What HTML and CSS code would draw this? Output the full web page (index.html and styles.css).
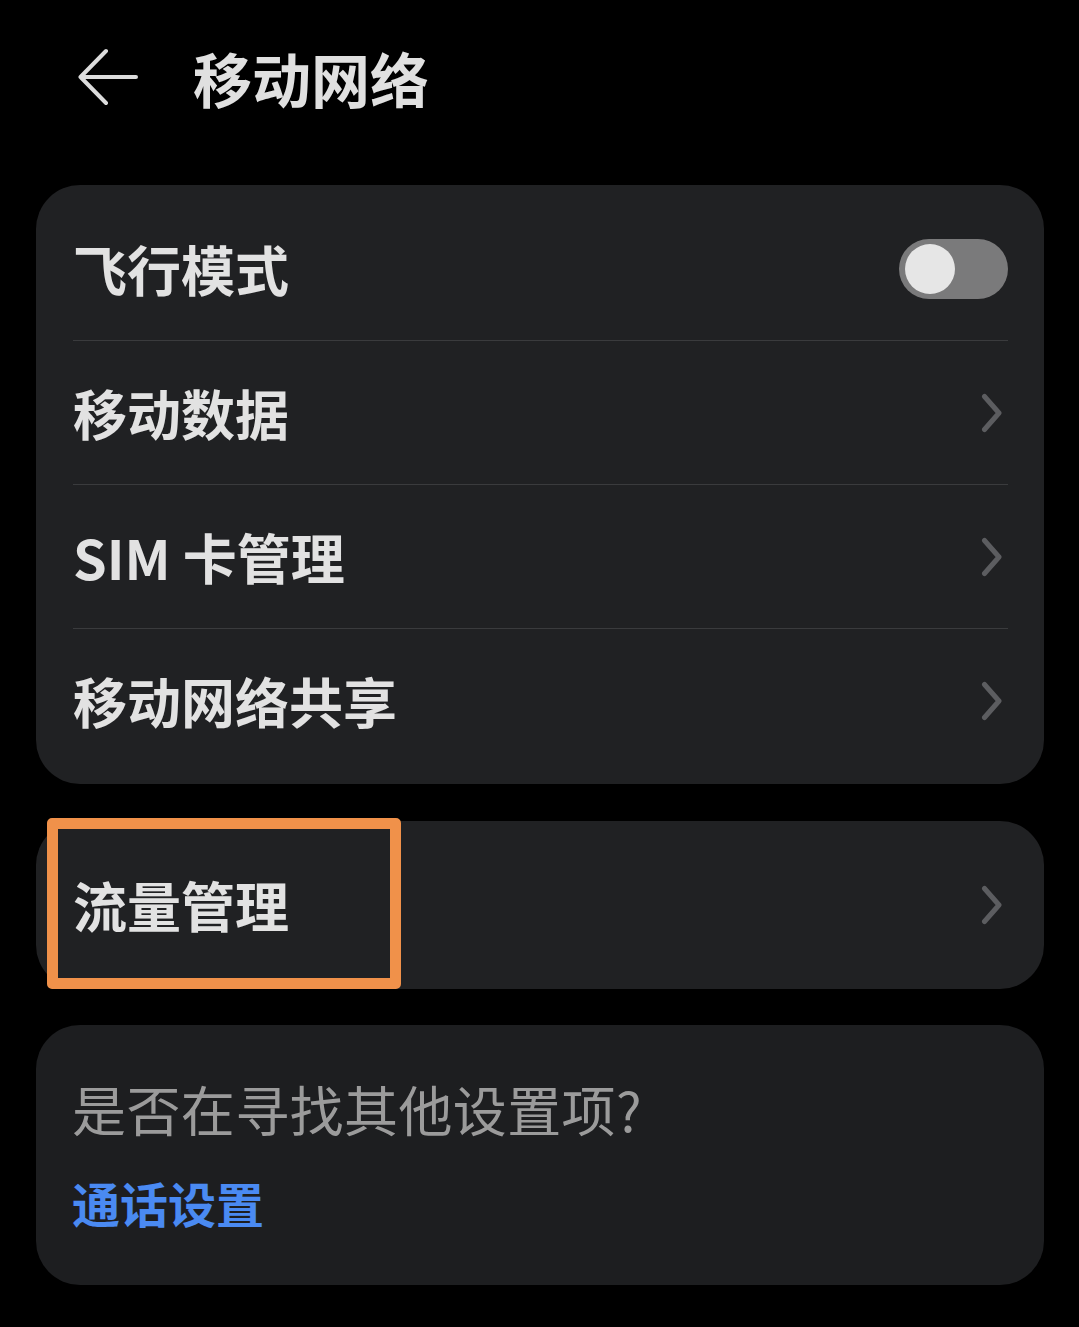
FILE: index.html
```html
<!DOCTYPE html>
<html lang="zh-CN">
<head>
<meta charset="utf-8">
<link rel="stylesheet" href="styles.css">
</head>
<body>
<div class="page">
  <header class="header">
    <svg class="back" width="60" height="58" viewBox="0 0 60 58"><path d="M28 3 L2.5 29 L28 55 M2.5 29 H58" fill="none" stroke="#dcdcdc" stroke-width="4" stroke-linecap="round" stroke-linejoin="round"/></svg>
    <h1 class="title">移动网络</h1>
  </header>

  <section class="card">
    <div class="row">
      <span class="label">飞行模式</span>
      <span class="toggle"><span class="knob"></span></span>
    </div>
    <div class="row">
      <span class="label">移动数据</span>
      <svg class="chev" width="22" height="40" viewBox="0 0 22 40"><path d="M3.5 3.5 L18 20 L3.5 36.5" fill="none" stroke="#5c5d60" stroke-width="5" stroke-linecap="round" stroke-linejoin="round"/></svg>
    </div>
    <div class="row">
      <span class="label">SIM 卡管理</span>
      <svg class="chev" width="22" height="40" viewBox="0 0 22 40"><path d="M3.5 3.5 L18 20 L3.5 36.5" fill="none" stroke="#5c5d60" stroke-width="5" stroke-linecap="round" stroke-linejoin="round"/></svg>
    </div>
    <div class="row last">
      <span class="label">移动网络共享</span>
      <svg class="chev" width="22" height="40" viewBox="0 0 22 40"><path d="M3.5 3.5 L18 20 L3.5 36.5" fill="none" stroke="#5c5d60" stroke-width="5" stroke-linecap="round" stroke-linejoin="round"/></svg>
    </div>
  </section>

  <section class="card card-single">
    <div class="row single">
      <span class="label">流量管理</span>
      <svg class="chev" width="22" height="40" viewBox="0 0 22 40"><path d="M3.5 3.5 L18 20 L3.5 36.5" fill="none" stroke="#5c5d60" stroke-width="5" stroke-linecap="round" stroke-linejoin="round"/></svg>
    </div>
    <div class="highlight"></div>
  </section>

  <section class="card card-help">
    <p class="help-q">是否在寻找其他设置项?</p>
    <a class="help-link">通话设置</a>
  </section>
</div>
</body>
</html>
```

FILE: styles.css
```css
* { box-sizing: border-box; }
html, body {
  margin: 0;
  padding: 0;
  background: #000;
}
body {
  font-family: "Noto Sans CJK SC", "Noto Sans", sans-serif;
  color: #e2e2e2;
}
.page {
  width: 1079px;
  padding: 0 35px 0 36px;
}
.header {
  height: 154px;
  display: flex;
  align-items: center;
  padding-left: 42px;
}
.back {
  display: block;
  flex: none;
}
.title {
  margin: 0 0 0 55px;
  font-size: 59px;
  font-weight: 700;
  line-height: 1;
  color: #e0e0e0;
  letter-spacing: 0;
}
.card {
  background: #202123;
  border-radius: 44px;
  margin-top: 31px;
  padding: 12px 0 11px;
}
.row {
  height: 144px;
  margin: 0 36px 0 37px;
  display: flex;
  align-items: center;
  justify-content: space-between;
  border-bottom: 1.5px solid #3a3b3d;
}
.row.last { border-bottom: none; }
.label {
  font-size: 54px;
  font-weight: 700;
  line-height: 1;
  color: #e2e2e2;
}
.chev {
  display: block;
  margin-right: 5px;
}
.toggle {
  width: 109px;
  height: 60px;
  border-radius: 30px;
  background: #7a7a7b;
  position: relative;
  display: block;
}
.knob {
  position: absolute;
  left: 6px;
  top: 5px;
  width: 50px;
  height: 50px;
  border-radius: 50%;
  background: #e6e6e6;
}
.card-single {
  position: relative;
  margin-top: 37px;
  padding: 0;
}
.row.single {
  height: 168px;
  border-bottom: none;
}
.highlight {
  position: absolute;
  left: 11px;
  top: -3px;
  width: 354px;
  height: 171px;
  border: 11px solid #f0914a;
  border-radius: 5px;
}
.card-help {
  margin-top: 36px;
  height: 260px;
  padding: 49px 36px 0;
  background: #1d1e20;
}
.help-q {
  margin: 0;
  font-size: 54px;
  font-weight: 400;
  line-height: 70px;
  letter-spacing: 0.4px;
  color: #9b9b9b;
}
.help-link {
  display: block;
  margin-top: 28px;
  font-size: 48px;
  font-weight: 700;
  line-height: 60px;
  color: #4a8af2;
}
```
